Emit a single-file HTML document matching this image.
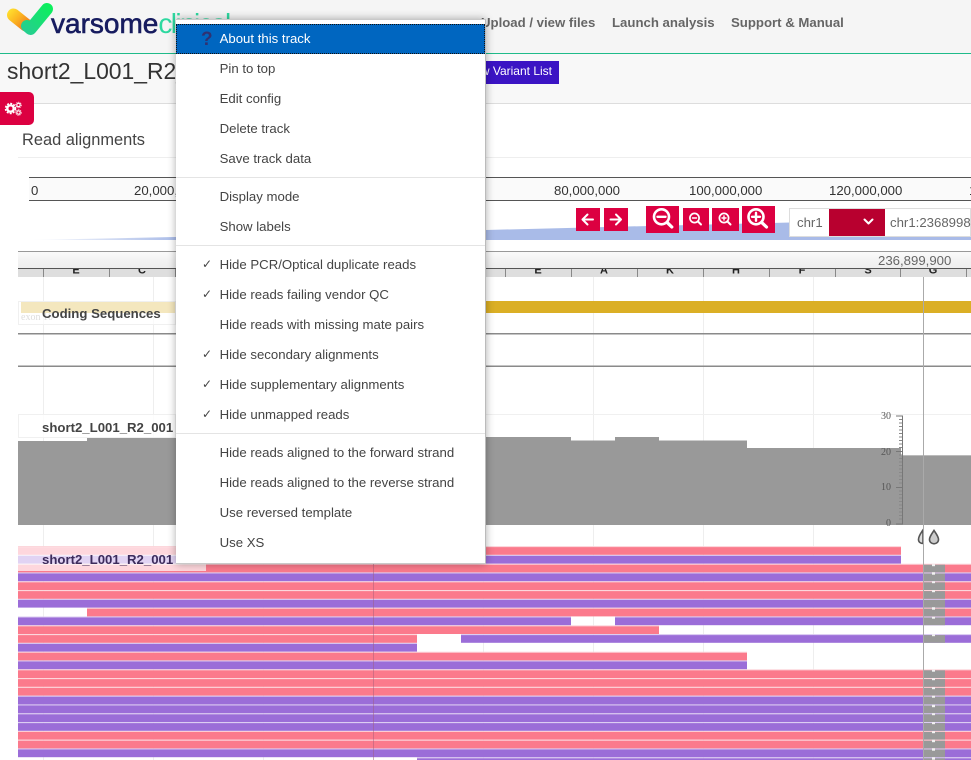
<!DOCTYPE html>
<html>
<head>
<meta charset="utf-8">
<style>
html,body{margin:0;padding:0;background:#fff}
body{position:relative;width:971px;height:760px;overflow:hidden;font-family:"Liberation Sans",sans-serif;color:#444}
.a{position:absolute;white-space:nowrap}
#hdr{left:0;top:0;width:971px;height:53px;background:#f5f5f5;border-bottom:1px solid #1fbb8a}
#sub{left:0;top:54px;width:971px;height:49px;background:#f8f8f8;border-bottom:1px solid #ddd}
.nav{top:15px;font-size:13.2px;line-height:16px;font-weight:bold;color:#666}
.tk{top:183px;font-size:13.2px;line-height:15px;color:#333}
.btn{background:#dc0041}
#menu{left:176px;top:19px;width:309px;height:543px;background:#fff;border:1px solid #c9c9c9;border-left:0;border-right:1px solid #bbb;box-sizing:content-box;box-shadow:0 0 8px rgba(0,0,0,.33);z-index:10}
#menu .i{position:absolute;left:0;width:309px;height:30px;line-height:29px;font-size:13.2px;color:#444;padding-left:43.6px;box-sizing:border-box}
#menu .c{position:absolute;left:26px;top:0;font-size:12px;font-family:"DejaVu Sans",sans-serif;color:#444}
#menu .s{position:absolute;left:0;width:309px;height:1px;background:#e4e4e4}
#menu .h{background:#0066c0;color:#fff;outline:1px dotted #111;outline-offset:-1px}
.p{fill:#fb7a8c}.u{fill:#9b6dd8}.g{fill:#999}
.pt{fill:#fcd3d9}.ut{fill:#d9c8f1}
</style>
</head>
<body>
<div class="a" id="hdr"></div>
<div class="a" id="sub"></div>

<svg class="a" style="left:6px;top:0" width="50" height="38" viewBox="0 0 50 38">
<defs>
<linearGradient id="lg1" gradientUnits="userSpaceOnUse" x1="3" y1="10" x2="20" y2="26"><stop offset="0" stop-color="#ffe02e"/><stop offset=".55" stop-color="#fbb020"/><stop offset="1" stop-color="#f07f1e"/></linearGradient>
<linearGradient id="lg2" gradientUnits="userSpaceOnUse" x1="20" y1="30" x2="44" y2="6"><stop offset="0" stop-color="#25cf8e"/><stop offset="1" stop-color="#0cf05c"/></linearGradient>
</defs>
<path d="M7.500 15L20 25" stroke="url(#lg1)" stroke-width="13" stroke-linecap="round" fill="none"/>
<path d="M21 26L24.500 29L41 9" stroke="url(#lg2)" stroke-width="12" stroke-linecap="round" stroke-linejoin="round" fill="none"/>
</svg>
<div class="a" style="left:51px;top:7px;font-size:28px;line-height:34px;color:#171c5f;-webkit-text-stroke:.6px #171c5f">varsome<span style="color:#2ed9a0;-webkit-text-stroke:0;letter-spacing:-1.6px">clinical</span></div>

<div class="a nav" style="left:481px">Upload / view files</div>
<div class="a nav" style="left:612px">Launch analysis</div>
<div class="a nav" style="left:731px">Support &amp; Manual</div>

<div class="a" style="left:7px;top:57px;font-size:22.9px;line-height:28px;color:#333">short2_L001_R2_001</div>
<div class="a" style="right:412px;top:61px;height:23px;line-height:21px;padding:0 7px;background:#3b14c4;color:#fff;font-size:12px">View Variant List</div>

<div class="a" style="left:0;top:92px;width:34px;height:33px;background:#dc0041;border-radius:0 5px 5px 0"></div>
<svg class="a" style="left:4px;top:100px" width="19" height="17" viewBox="0 0 19 17">
<circle cx="6.500" cy="8.500" r="3.200" fill="none" stroke="#fff" stroke-width="2.400"/>
<circle cx="6.500" cy="8.500" r="5" fill="none" stroke="#fff" stroke-width="1.500" stroke-dasharray="2 1.300"/>
<circle cx="14.500" cy="5" r="1.700" fill="none" stroke="#fff" stroke-width="1.100"/>
<circle cx="14.500" cy="5" r="2.800" fill="none" stroke="#fff" stroke-width=".8" stroke-dasharray="1.200 .9"/>
<circle cx="14.500" cy="12.500" r="1.700" fill="none" stroke="#fff" stroke-width="1.100"/>
<circle cx="14.500" cy="12.500" r="2.800" fill="none" stroke="#fff" stroke-width=".8" stroke-dasharray="1.200 .9"/>
</svg>

<div class="a" style="left:22px;top:130px;font-size:16.4px;line-height:20px;color:#444">Read alignments</div>
<div class="a" style="left:18px;top:157px;width:953px;height:1px;background:#eee"></div>

<!-- overview -->
<div class="a" style="left:29px;top:177px;width:942px;height:24px;background:#fafafa;border-top:1px solid #555;border-bottom:1px solid #555;box-sizing:border-box"></div>
<div class="a tk" style="left:31px">0</div>
<div class="a tk" style="left:134px">20,000,000</div>
<div class="a tk" style="left:554px">80,000,000</div>
<div class="a tk" style="left:689px">100,000,000</div>
<div class="a tk" style="left:829px">120,000,000</div>
<div class="a" style="left:969px;top:183px;width:2px;height:15px;overflow:hidden"><div class="a tk" style="left:0;top:0">140,000,000</div></div>
<svg class="a" style="left:0;top:215px" width="971" height="26">
<defs><linearGradient id="ov" x1="0" x2="1" y1="0" y2="0"><stop offset="0" stop-color="#fff"/><stop offset=".16" stop-color="#a9bbe8"/><stop offset="1" stop-color="#a9bbe8"/></linearGradient></defs>
<path d="M29 25L175 22L486 15L790 7.500L971 5V25Z" fill="url(#ov)"/>
</svg>

<!-- buttons -->
<div class="a btn" style="left:576px;top:208px;width:24px;height:23px"></div>
<div class="a btn" style="left:604px;top:208px;width:24px;height:23px"></div>
<svg class="a" style="left:576px;top:208px" width="52" height="23" fill="none" stroke="#fff" stroke-width="2" stroke-linecap="round" stroke-linejoin="round">
<path d="M6.500 11.500H17M11.500 6.500L6.500 11.500L11.500 16.500"/>
<path d="M34.500 11.500H45M40 6.500L45 11.500L40 16.500"/>
</svg>
<div class="a btn" style="left:646px;top:206px;width:33px;height:27px"></div>
<div class="a btn" style="left:683px;top:208px;width:26px;height:23px"></div>
<div class="a btn" style="left:712px;top:208px;width:27px;height:23px"></div>
<div class="a btn" style="left:742px;top:206px;width:33px;height:27px"></div>
<svg class="a" style="left:646px;top:206px" width="130" height="27" fill="none" stroke="#fff" stroke-linecap="round">
<circle cx="15.500" cy="10.800" r="7.500" stroke-width="2.600"/><path d="M21.500 16.800L25.800 21" stroke-width="3.200"/><path d="M11.500 10.800H19.500" stroke-width="2.400"/>
<circle cx="48.500" cy="12" r="4.600" stroke-width="1.700"/><path d="M52 15.500L55 18.500" stroke-width="2"/><path d="M46.500 12H50.500" stroke-width="1.400"/>
<circle cx="78" cy="12" r="4.600" stroke-width="1.700"/><path d="M81.500 15.500L84.500 18.500" stroke-width="2"/><path d="M76 12H80M78 10V14" stroke-width="1.400"/>
<circle cx="110" cy="10.800" r="7.500" stroke-width="2.600"/><path d="M116 16.800L120.500 21" stroke-width="3.200"/><path d="M106 10.800H114M110 6.800V14.800" stroke-width="2.400"/>
</svg>
<div class="a" style="left:789px;top:208px;width:182px;height:29px;background:#fff;border:1px solid #ddd;box-sizing:border-box"></div>
<div class="a" style="left:797px;top:215px;font-size:13.2px;line-height:15px;color:#666">chr1</div>
<div class="a" style="left:829px;top:209px;width:56px;height:27px;background:#b8002f"></div>
<svg class="a" style="left:862px;top:217px" width="13" height="10" fill="none" stroke="#fff" stroke-width="2" stroke-linecap="round" stroke-linejoin="round"><path d="M2.500 2.500L6.500 6.500L10.500 2.500"/></svg>
<div class="a" style="left:890px;top:215px;font-size:13.2px;line-height:15px;color:#666">chr1:2368998</div>

<!-- ruler -->
<div class="a" style="left:18px;top:251px;width:953px;height:18px;background:linear-gradient(#fafafa,#f3f3f3 50%,#eee);border-top:1px solid #999;border-bottom:1px solid #555;box-sizing:border-box"></div>
<div class="a" style="left:878px;top:253px;font-size:13.2px;line-height:15px;color:#666">236,899,900</div>
<div class="a" style="left:18px;top:269px;width:953px;height:8px;background:#dedede;overflow:hidden">
<svg class="a" style="left:0;top:0" width="953" height="8">
<g fill="#888"><rect x="25" width="1" height="8"/><rect x="91" width="1" height="8"/><rect x="157" width="1" height="8"/><rect x="487" width="1" height="8"/><rect x="553" width="1" height="8"/><rect x="619" width="1" height="8"/><rect x="685" width="1" height="8"/><rect x="751" width="1" height="8"/><rect x="817" width="1" height="8"/><rect x="882" width="1" height="8"/><rect x="948" width="1" height="8"/></g>
<g font-family="Liberation Sans" font-weight="bold" font-size="11" fill="#222" text-anchor="middle">
<text x="58" y="4.500">E</text><text x="124" y="4.500">C</text><text x="520" y="4.500">E</text><text x="586" y="4.500">A</text><text x="652" y="4.500">K</text><text x="718" y="4.500">H</text><text x="784" y="4.500">F</text><text x="850" y="4.500">S</text><text x="915" y="4.500">G</text></g>
</svg>
</div>

<!-- main tracks -->
<svg class="a" style="left:0;top:0" width="971" height="760">
<g fill="#eee">
<rect x="43" y="277" width="1" height="483"/><rect x="153" y="277" width="1" height="483"/><rect x="263" y="277" width="1" height="483"/><rect x="373" y="277" width="1" height="483"/><rect x="483" y="277" width="1" height="483"/><rect x="593" y="277" width="1" height="483"/><rect x="703" y="277" width="1" height="483"/><rect x="813" y="277" width="1" height="483"/>
</g>
<rect x="18" y="414" width="953" height="1" fill="#f0f0f0"/>
<rect x="21" y="301" width="950" height="12" fill="#dbaf25"/>
<rect x="18" y="333" width="953" height="1.500" fill="#8a8a8a"/>
<rect x="18" y="365.500" width="953" height="1.500" fill="#8a8a8a"/>
<path d="M18 525V441H87V438H176V437H571V440.500H615V437H659V440.500H747V448H901V455H945V456H971V525Z" fill="#999"/>
<rect x="901" y="455" width="70" height="1" fill="#bbb"/>

<!-- axis -->
<g fill="#777">
<rect x="902" y="415.500" width="1" height="109"/>
<rect x="896" y="415.500" width="6" height="1"/><rect x="896" y="451" width="6" height="1"/><rect x="896" y="487" width="6" height="1"/><rect x="896" y="523.500" width="6" height="1"/>
<path d="M899 419.500h3M899 423h3M899 426.500h3M899 430h3M899 433.500h3M899 437h3M899 440.500h3M899 444h3M899 447.500h3M899 455h3M899 458.500h3M899 462h3M899 465.500h3M899 469h3M899 472.500h3M899 476h3M899 479.500h3M899 483h3M899 491h3M899 494.500h3M899 498h3M899 501.500h3M899 505h3M899 508.500h3M899 512h3M899 515.500h3M899 519h3" stroke="#888" stroke-width="1" fill="none"/>
</g>
<g font-family="Liberation Serif" font-size="10" fill="#555" text-anchor="end">
<text x="891" y="419">30</text><text x="891" y="455">20</text><text x="891" y="490">10</text><text x="891" y="526">0</text>
</g>
<!-- drops -->
<path d="M923 530C921 533 918.500 536 918.500 539.500C918.500 542 920.500 543.500 923 543.500Z" fill="#ddd" stroke="#555" stroke-width="1.600"/>
<path d="M934 530.500C932 533.500 929.500 536.500 929.500 539.500C929.500 542 931.500 543.800 934 543.800C936.500 543.800 938.500 542 938.500 539.500C938.500 536.500 936 533.500 934 530.500Z" fill="#ccc" stroke="#555" stroke-width="1.600"/>

<g transform="translate(0,.2)">
<!-- read tints -->
<g class="pt">
<rect x="18" y="545.900" width="883" height="1"/><rect x="18" y="563.500" width="953" height="1"/><rect x="18" y="581.100" width="953" height="1"/><rect x="18" y="589.900" width="953" height="1"/><rect x="87" y="607.500" width="884" height="1"/><rect x="18" y="625.100" width="641" height="1"/><rect x="18" y="633.900" width="399" height="1"/><rect x="18" y="651.500" width="729" height="1"/><rect x="18" y="669.100" width="953" height="1"/><rect x="18" y="677.900" width="953" height="1"/><rect x="18" y="686.700" width="953" height="1"/><rect x="18" y="730.700" width="953" height="1"/><rect x="18" y="739.500" width="953" height="1"/>
</g>
<g class="ut">
<rect x="18" y="554.700" width="883" height="1"/><rect x="18" y="572.300" width="953" height="1"/><rect x="18" y="598.700" width="953" height="1"/><rect x="18" y="616.300" width="553" height="1"/><rect x="615" y="616.300" width="356" height="1"/><rect x="461" y="633.900" width="510" height="1"/><rect x="18" y="642.700" width="399" height="1"/><rect x="18" y="660.300" width="729" height="1"/><rect x="18" y="695.500" width="953" height="1"/><rect x="18" y="704.300" width="953" height="1"/><rect x="18" y="713.100" width="953" height="1"/><rect x="18" y="721.900" width="953" height="1"/><rect x="18" y="748.300" width="953" height="1"/><rect x="417" y="757.100" width="554" height="1"/>
</g>
<!-- reads -->
<rect class="p" x="18" y="546.900" width="883" height="7.700"/>
<rect class="u" x="18" y="555.700" width="883" height="7.700"/>
<rect class="p" x="18" y="564.500" width="953" height="7.700"/>
<rect class="u" x="18" y="573.300" width="953" height="7.700"/>
<rect class="p" x="18" y="582.100" width="953" height="7.700"/>
<rect class="p" x="18" y="590.900" width="953" height="7.700"/>
<rect class="u" x="18" y="599.700" width="953" height="7.700"/>
<rect class="p" x="87" y="608.500" width="884" height="7.700"/>
<rect class="u" x="18" y="617.300" width="553" height="7.700"/><rect class="u" x="615" y="617.300" width="356" height="7.700"/>
<rect class="p" x="18" y="626.100" width="641" height="7.700"/>
<rect class="p" x="18" y="634.900" width="399" height="7.700"/><rect class="u" x="461" y="634.900" width="510" height="7.700"/>
<rect class="u" x="18" y="643.700" width="399" height="7.700"/>
<rect class="p" x="18" y="652.500" width="729" height="7.700"/>
<rect class="u" x="18" y="661.300" width="729" height="7.700"/>
<rect class="p" x="18" y="670.100" width="953" height="7.700"/>
<rect class="p" x="18" y="678.900" width="953" height="7.700"/>
<rect class="p" x="18" y="687.700" width="953" height="7.700"/>
<rect class="u" x="18" y="696.500" width="953" height="7.700"/>
<rect class="u" x="18" y="705.300" width="953" height="7.700"/>
<rect class="u" x="18" y="714.100" width="953" height="7.700"/>
<rect class="u" x="18" y="722.900" width="953" height="7.700"/>
<rect class="p" x="18" y="731.700" width="953" height="7.700"/>
<rect class="p" x="18" y="740.500" width="953" height="7.700"/>
<rect class="u" x="18" y="749.300" width="953" height="7.700"/>
<rect class="u" x="417" y="758.100" width="554" height="1.900"/>
<!-- grey column -->
<g class="g">
<rect x="923" y="564.500" width="22" height="7.700"/><rect x="923" y="573.300" width="22" height="7.700"/><rect x="923" y="582.100" width="22" height="7.700"/><rect x="923" y="590.900" width="22" height="7.700"/><rect x="923" y="599.700" width="22" height="7.700"/><rect x="923" y="608.500" width="22" height="7.700"/><rect x="923" y="617.300" width="22" height="7.700"/><rect x="923" y="634.900" width="22" height="7.700"/>
<rect x="923" y="670.100" width="22" height="7.700"/><rect x="923" y="678.900" width="22" height="7.700"/><rect x="923" y="687.700" width="22" height="7.700"/><rect x="923" y="696.500" width="22" height="7.700"/><rect x="923" y="705.300" width="22" height="7.700"/><rect x="923" y="714.100" width="22" height="7.700"/><rect x="923" y="722.900" width="22" height="7.700"/><rect x="923" y="731.700" width="22" height="7.700"/><rect x="923" y="740.500" width="22" height="7.700"/><rect x="923" y="749.300" width="22" height="7.700"/><rect x="923" y="758.100" width="22" height="1.900"/>
</g>
<g fill="#f2f2f2">
<rect x="932" y="564" width="3" height="2"/><rect x="932" y="572" width="3" height="2.500"/><rect x="932" y="581" width="3" height="2"/><rect x="932" y="590" width="3" height="2"/><rect x="932" y="607" width="3" height="2.500"/><rect x="932" y="616.500" width="3" height="2"/><rect x="932" y="634" width="3" height="2"/>
<rect x="932" y="669.500" width="3" height="2"/><rect x="932" y="678" width="3" height="2"/><rect x="932" y="687" width="3" height="2"/><rect x="932" y="695.500" width="3" height="2"/><rect x="932" y="704.500" width="3" height="2.500"/><rect x="932" y="713" width="3" height="2"/><rect x="932" y="722" width="3" height="2"/><rect x="932" y="731" width="3" height="2"/><rect x="932" y="739.500" width="3" height="2.500"/><rect x="932" y="748" width="3" height="2.500"/><rect x="932" y="757" width="3" height="2.500"/>
</g>
</g>
<rect x="923" y="277" width="1" height="483" fill="#aaa"/>
<rect x="373" y="547" width="1" height="213" fill="#a05a78" opacity=".45"/>
</svg>

<!-- label overlays -->
<div class="a" style="left:18px;top:301px;width:158px;height:24px;background:rgba(255,255,255,.7);border:1px solid #f0f0f0;box-sizing:border-box"></div>
<div class="a" style="left:21px;top:313px;font:10px/10px 'Liberation Serif',serif;color:#ddd">exon 10</div>
<div class="a" style="left:42px;top:306px;font-size:13.2px;line-height:16px;font-weight:bold;color:#444">Coding Sequences</div>
<div class="a" style="left:18px;top:414px;width:158px;height:24px;background:rgba(255,255,255,.8);border:1px solid #f0f0f0;box-sizing:border-box"></div>
<div class="a" style="left:42px;top:420px;font-size:13.2px;line-height:16px;font-weight:bold;color:#444">short2_L001_R2_001</div>
<div class="a" style="left:18px;top:547px;width:188px;height:24px;background:rgba(255,255,255,.7)"></div>
<div class="a" style="left:42px;top:552px;font-size:13.2px;line-height:16px;font-weight:bold;color:#3d2c5c">short2_L001_R2_001</div>

<!-- menu -->
<div class="a" id="menu">
<div class="i h" style="top:4px"><span class="a" style="left:25px;top:1px;font-size:19px;font-weight:bold;color:#2f3272">?</span>About this track</div>
<div class="i" style="top:34px">Pin to top</div>
<div class="i" style="top:64px">Edit config</div>
<div class="i" style="top:94px">Delete track</div>
<div class="i" style="top:124px">Save track data</div>
<div class="s" style="top:157px"></div>
<div class="i" style="top:162px">Display mode</div>
<div class="i" style="top:192px">Show labels</div>
<div class="s" style="top:225px"></div>
<div class="i" style="top:230px"><span class="c">✓</span>Hide PCR/Optical duplicate reads</div>
<div class="i" style="top:260px"><span class="c">✓</span>Hide reads failing vendor QC</div>
<div class="i" style="top:290px">Hide reads with missing mate pairs</div>
<div class="i" style="top:320px"><span class="c">✓</span>Hide secondary alignments</div>
<div class="i" style="top:350px"><span class="c">✓</span>Hide supplementary alignments</div>
<div class="i" style="top:380px"><span class="c">✓</span>Hide unmapped reads</div>
<div class="s" style="top:413px"></div>
<div class="i" style="top:418px">Hide reads aligned to the forward strand</div>
<div class="i" style="top:448px">Hide reads aligned to the reverse strand</div>
<div class="i" style="top:478px">Use reversed template</div>
<div class="i" style="top:508px">Use XS</div>
</div>
</body>
</html>
